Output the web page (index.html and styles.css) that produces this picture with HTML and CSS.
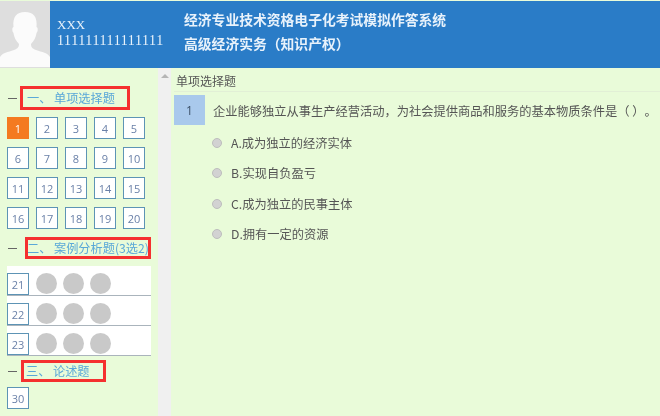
FILE: index.html
```html
<!DOCTYPE html>
<html lang="zh">
<head>
<meta charset="utf-8">
<title>经济专业技术资格电子化考试模拟作答系统</title>
<link rel="stylesheet" href="styles.css">
</head>
<body>
<header class="header">
  <div class="avatar">
    <svg width="50" height="66" viewBox="0 0 50 66">
      <path fill="#fbfbfb" d="M0 66V56c2-4 8-5 14-7 4-1.500 5-3 5-6-3-3-5-7-5.500-11-1-1-1.500-3-1-5 .5-1 1-1 1-1-1-10 3-15 11.500-15s12.500 5 11.500 15c0 0 .5 0 1 1 .5 2 0 4-1 5-.5 4-2.500 8-5.500 11 0 3 1 4.500 5 6 6 2 12 3 14 7v10z"/>
    </svg>
  </div>
  <div class="user">
    <div class="user-name">XXX</div>
    <div class="user-id">111111111111111</div>
  </div>
  <div class="titles">
    <div class="title-line">经济专业技术资格电子化考试模拟作答系统</div>
    <div class="title-line">高级经济实务（知识产权）</div>
  </div>
</header>
<div class="body">
  <aside class="side">
    <div class="sec sec-1"><span class="dash"></span><span class="sec-text box-1"><span class="sec-no">一、</span>单项选择题</span></div>
    <div class="grid">
      <span class="num current">1</span><span class="num">2</span><span class="num">3</span><span class="num">4</span><span class="num">5</span>
      <span class="num">6</span><span class="num">7</span><span class="num">8</span><span class="num">9</span><span class="num">10</span>
      <span class="num">11</span><span class="num">12</span><span class="num">13</span><span class="num">14</span><span class="num">15</span>
      <span class="num">16</span><span class="num">17</span><span class="num">18</span><span class="num">19</span><span class="num">20</span>
    </div>
    <div class="sec sec-2"><span class="dash"></span><span class="sec-text box-2"><span class="sec-no">二、</span>案例分析题(3选2)</span></div>
    <div class="case first"><span class="num">21</span><span class="dot"></span><span class="dot"></span><span class="dot"></span></div>
    <div class="case"><span class="num">22</span><span class="dot"></span><span class="dot"></span><span class="dot"></span></div>
    <div class="case"><span class="num">23</span><span class="dot"></span><span class="dot"></span><span class="dot"></span></div>
    <div class="sec sec-3"><span class="dash"></span><span class="sec-text box-3"><span class="sec-no">三、</span>论述题</span></div>
    <div class="last"><span class="num">30</span></div>
  </aside>
  <div class="scroll"><span class="arrow"></span></div>
  <main class="main">
    <div class="main-head">单项选择题</div>
    <div class="question">
      <div class="q-no">1</div>
      <div class="q-text">企业能够独立从事生产经营活动，为社会提供商品和服务的基本物质条件是（ ）。</div>
    </div>
    <div class="opts">
      <div class="opt"><span class="radio"></span>A.成为独立的经济实体</div>
      <div class="opt"><span class="radio"></span>B.实现自负盈亏</div>
      <div class="opt"><span class="radio"></span>C.成为独立的民事主体</div>
      <div class="opt"><span class="radio"></span>D.拥有一定的资源</div>
    </div>
  </main>
</div>
</body>
</html>
```
FILE: styles.css
```css
* { box-sizing: border-box; }
html, body { margin: 0; padding: 0; }
body {
  width: 660px;
  height: 416px;
  overflow: hidden;
  background: #e9fbd9;
  font-family: "Open Sans", "Noto Sans CJK SC", sans-serif;
  font-size: 12px;
  color: #555;
  text-spacing-trim: space-all;
  filter: blur(0.35px);
}
.header {
  display: flex;
  height: 67px;
  margin-top: 1px;
  background: #2a7cc7;
  color: #e8f2fb;
}
.avatar { width: 50px; height: 67px; background: #dedede; }
.avatar svg { display: block; }
.user { width: 134px; padding: 16px 0 0 7px; }
.user-name { font-family: "Liberation Serif", serif; font-size: 13px; line-height: 15px; }
.user-id { font-family: "Liberation Serif", serif; font-size: 14px; letter-spacing: .6px; line-height: 18px; }
.titles { padding-top: 6px; font-weight: 700; font-size: 13.8px; font-family: "Noto Sans CJK SC", sans-serif; }
.title-line { line-height: 24px; height: 24px; }
.body { display: flex; height: 348px; }
.side { width: 158px; padding: 0 7px 0 6px; }
.sec { display: flex; align-items: center; height: 22px; color: #5aa8d8; font-size: 12.2px; font-family: "Noto Sans CJK SC", sans-serif; }
.sec-1 { margin-top: 18px; height: 24px; }
.sec-2 { margin-top: 8px; }
.sec-3 { margin-top: 4px; }
.dash { width: 9px; height: 1px; background: #666; margin: 0 3px 0 2px; flex: none; }
.sec-text { display: flex; align-items: center; height: 22px; outline: 3px solid #f5302f; outline-offset: -3px; white-space: nowrap; }
.sec-no { width: 27px; flex: none; }
.box-1 { width: 110px; height: 24px; padding-left: 7px; }
.box-2 { width: 128px; margin-left: 5px; padding-left: 2px; }
.box-3 { width: 85px; margin-left: 1px; padding-left: 5px; }
.grid {
  display: grid;
  grid-template-columns: repeat(5, 22px);
  grid-auto-rows: 22px;
  column-gap: 7px;
  row-gap: 8px;
  margin-top: 7px;
  padding-left: 1px;
}
.num {
  display: flex;
  align-items: center;
  justify-content: center;
  width: 22px;
  height: 22px;
  background: #fff;
  border: 1px solid #5d94b5;
  color: #6a80a8;
  font-size: 11px;
  flex: none;
}
.current { background: #f47a20; border-color: #f47a20; color: #fff; }
.case {
  display: flex;
  align-items: flex-end;
  height: 30px;
  margin-left: 1px;
  width: 144px;
  background: #fff;
  border-bottom: 1px solid #aab4bc;
  gap: 6px;
}
.case .num { margin-right: 1px; }
.case.first { margin-top: 7px; }
.dot { width: 21px; height: 21px; border-radius: 50%; background: #c9c9c9; margin-bottom: 1px; }
.last { margin: 5px 0 0 1px; }
.scroll {
  width: 13px;
  background: #f0f0f0;
  display: flex;
  justify-content: center;
  padding-top: 6px;
}
.arrow {
  width: 0;
  height: 0;
  border-left: 4px solid transparent;
  border-right: 4px solid transparent;
  border-bottom: 4px solid #b5b5b5;
}
.main { flex: 1; padding: 0 0 0 3px; }
.main-head {
  height: 24px;
  line-height: 25px;
  padding-left: 2px;
  color: #555;
  border-bottom: 1px solid #e2efd6;
  font-family: "Noto Sans CJK SC", sans-serif;
}
.question { display: flex; margin-top: 3px; }
.q-no {
  width: 31px;
  height: 30px;
  background: #a9c9ec;
  color: #3b5068;
  display: flex;
  align-items: center;
  justify-content: center;
}
.q-text { padding-left: 8px; line-height: 33px; font-size: 12.25px; font-family: "Noto Sans CJK SC", sans-serif; white-space: nowrap; }
.opt {
  display: flex;
  align-items: center;
  height: 30.300px;
  padding-left: 38px;
  font-size: 12.25px;
  font-family: "Noto Sans CJK SC", sans-serif;
  color: #555;
}
.radio {
  width: 10px;
  height: 10px;
  border-radius: 50%;
  background: #d2d2d2;
  border: 1px solid #bdbdbd;
  margin-right: 9px;
}
```
